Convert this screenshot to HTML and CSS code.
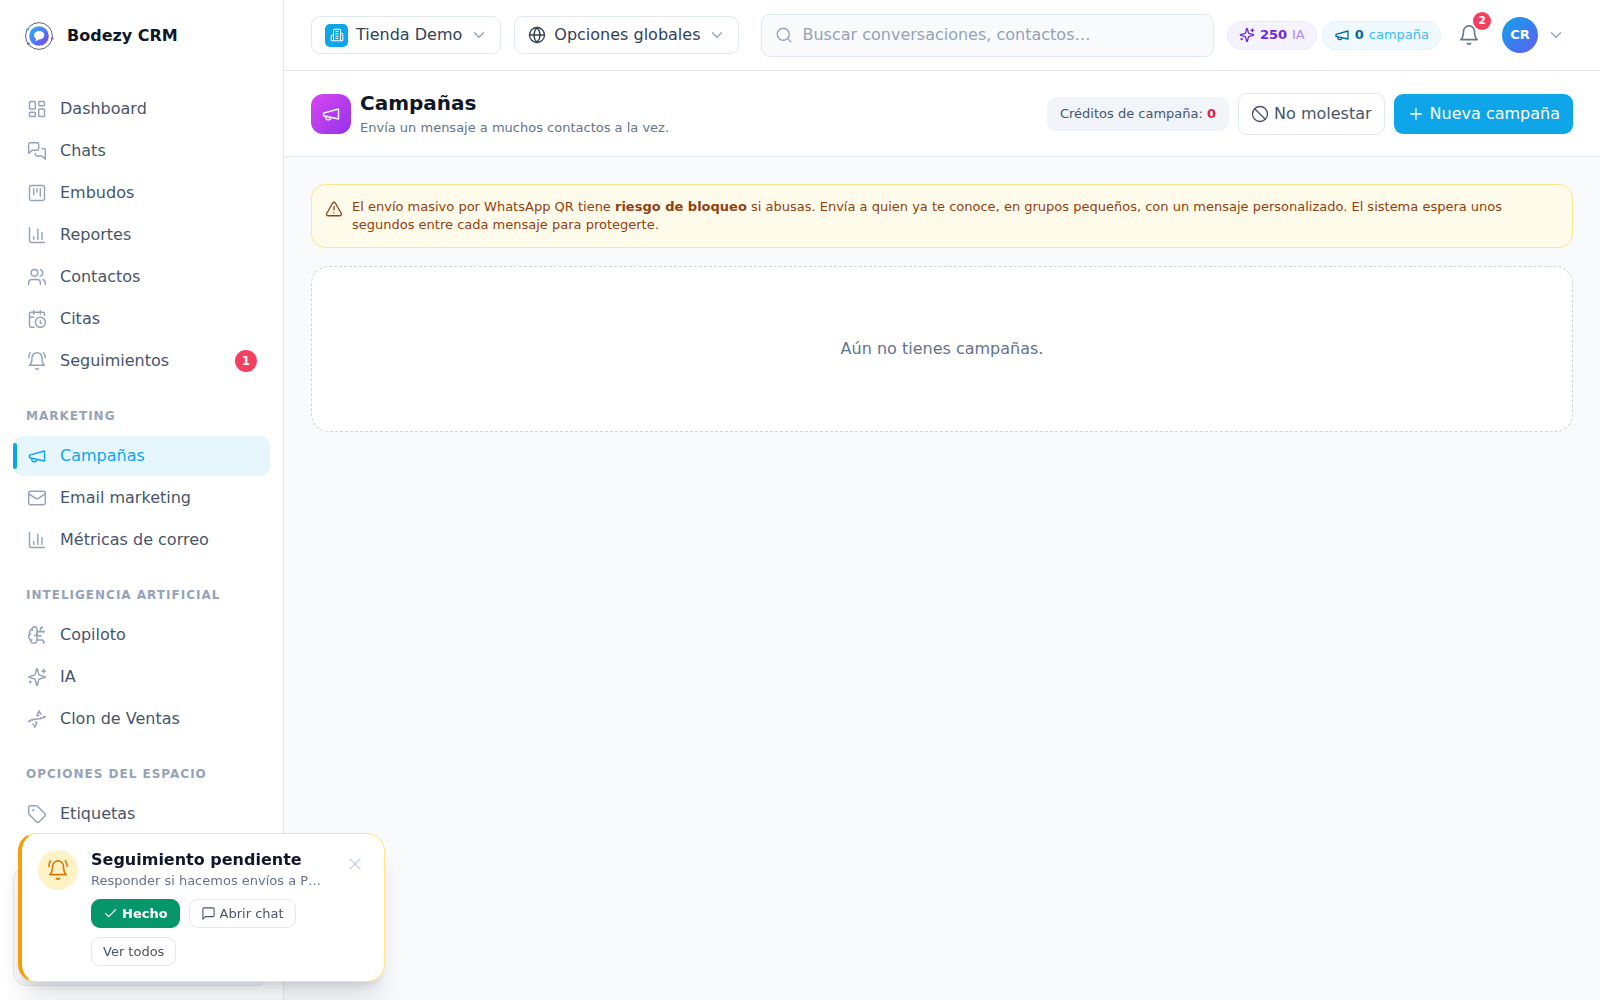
FILE: index.html
```html
<!DOCTYPE html>
<html lang="es">
<head>
<meta charset="utf-8">
<meta name="viewport" content="width=device-width, initial-scale=1">
<title>Campañas · Bodezy CRM</title>
<link rel="stylesheet" href="styles.css">
</head>
<body>
<svg class="sprite" aria-hidden="true">
  <symbol id="dashboard" viewBox="0 0 24 24"><rect x="3" y="3" width="7" height="9" rx="1"/><rect x="14" y="3" width="7" height="5" rx="1"/><rect x="14" y="12" width="7" height="9" rx="1"/><rect x="3" y="16" width="7" height="5" rx="1"/></symbol>
  <symbol id="chats" viewBox="0 0 24 24"><path d="M14 9a2 2 0 0 1-2 2H6l-4 4V4a2 2 0 0 1 2-2h8a2 2 0 0 1 2 2z"/><path d="M18 9h2a2 2 0 0 1 2 2v11l-4-4h-6a2 2 0 0 1-2-2v-1"/></symbol>
  <symbol id="kanban" viewBox="0 0 24 24"><rect x="3" y="3" width="18" height="18" rx="2"/><path d="M8 7v7M12 7v4M16 7v9"/></symbol>
  <symbol id="chart" viewBox="0 0 24 24"><path d="M3 3v16a2 2 0 0 0 2 2h16M18 17V9M13 17V5M8 17v-3"/></symbol>
  <symbol id="users" viewBox="0 0 24 24"><path d="M16 21v-2a4 4 0 0 0-4-4H6a4 4 0 0 0-4 4v2"/><circle cx="9" cy="7" r="4"/><path d="M22 21v-2a4 4 0 0 0-3-3.87M16 3.13a4 4 0 0 1 0 7.75"/></symbol>
  <symbol id="calendar" viewBox="0 0 24 24"><path d="M21 7.5V6a2 2 0 0 0-2-2H5a2 2 0 0 0-2 2v14a2 2 0 0 0 2 2h3.5M16 2v4M8 2v4M3 10h5M17.5 17.5 16 16.3V14"/><circle cx="16" cy="16" r="6"/></symbol>
  <symbol id="bell" viewBox="0 0 24 24"><path d="M6 8a6 6 0 0 1 12 0c0 7 3 9 3 9H3s3-2 3-9M10.3 21a1.94 1.94 0 0 0 3.4 0"/></symbol>
  <symbol id="bell-ring" viewBox="0 0 24 24"><path d="M6 8a6 6 0 0 1 12 0c0 7 3 9 3 9H3s3-2 3-9M10.3 21a1.94 1.94 0 0 0 3.4 0M4 2C2.8 3.7 2 5.7 2 8M22 8c0-2.3-.8-4.3-2-6"/></symbol>
  <symbol id="megaphone" viewBox="0 0 24 24"><path d="m3 11 18-5v12L3 14v-3zM11.6 16.8a3 3 0 1 1-5.8-1.6"/></symbol>
  <symbol id="mail" viewBox="0 0 24 24"><rect x="2" y="4" width="20" height="16" rx="2"/><path d="m22 7-8.97 5.7a1.94 1.94 0 0 1-2.06 0L2 7"/></symbol>
  <symbol id="brain" viewBox="0 0 24 24"><path d="M12 5a3 3 0 1 0-5.997.125 4 4 0 0 0-2.526 5.77 4 4 0 0 0 .556 6.588A4 4 0 1 0 12 18Z"/><path d="M9 13a4.5 4.5 0 0 0 3-4M6.003 5.125A3 3 0 0 0 6.401 6.5M3.477 10.896a4 4 0 0 1 .585-.396M6 18a4 4 0 0 1-1.967-.516M12 13h4M12 18h6a2 2 0 0 1 2 2v1M12 8h8M16 8V5a2 2 0 0 1 2-2"/><circle cx="16" cy="13" r=".5"/><circle cx="18" cy="3" r=".5"/><circle cx="20" cy="21" r=".5"/><circle cx="20" cy="8" r=".5"/></symbol>
  <symbol id="sparkles" viewBox="0 0 24 24"><path d="M9.937 15.5A2 2 0 0 0 8.5 14.063l-6.135-1.582a.5.5 0 0 1 0-.962L8.5 9.936A2 2 0 0 0 9.937 8.5l1.582-6.135a.5.5 0 0 1 .963 0L14.063 8.5A2 2 0 0 0 15.5 9.937l6.135 1.581a.5.5 0 0 1 0 .964L15.5 14.063a2 2 0 0 0-1.437 1.437l-1.582 6.135a.5.5 0 0 1-.963 0z"/><path d="M20 3v4M22 5h-4M4 17v2M5 18H3"/></symbol>
  <symbol id="dna" viewBox="0 0 24 24"><path d="m10 16 1.5 1.5M14 8l-1.5-1.5M15 2c-1.798 1.998-2.518 3.995-2.807 5.993M16.5 10.5l1 1M17 6l-2.891-2.891M2 15c6.667-6 13.333 0 20-6M20 9l.891.891M3.109 14.109 4 15M6.5 12.5l1 1M7 18l2.891 2.891M9 22c1.798-1.998 2.518-3.995 2.807-5.993"/></symbol>
  <symbol id="tag" viewBox="0 0 24 24"><path d="M12.586 2.586A2 2 0 0 0 11.172 2H4a2 2 0 0 0-2 2v7.172a2 2 0 0 0 .586 1.414l8.704 8.704a2.426 2.426 0 0 0 3.42 0l6.58-6.58a2.426 2.426 0 0 0 0-3.42z"/><circle cx="7.5" cy="7.5" r=".5"/></symbol>
  <symbol id="building" viewBox="0 0 24 24"><path d="M6 22V4a2 2 0 0 1 2-2h8a2 2 0 0 1 2 2v18ZM6 12H4a2 2 0 0 0-2 2v6a2 2 0 0 0 2 2h2M18 9h2a2 2 0 0 1 2 2v9a2 2 0 0 1-2 2h-2M10 6h4M10 10h4M10 14h4M10 18h4"/></symbol>
  <symbol id="globe" viewBox="0 0 24 24"><circle cx="12" cy="12" r="10"/><path d="M12 2a14.5 14.5 0 0 0 0 20 14.5 14.5 0 0 0 0-20M2 12h20"/></symbol>
  <symbol id="chevron" viewBox="0 0 24 24"><path d="m6 9 6 6 6-6"/></symbol>
  <symbol id="search" viewBox="0 0 24 24"><circle cx="11" cy="11" r="8"/><path d="m21 21-4.3-4.3"/></symbol>
  <symbol id="ban" viewBox="0 0 24 24"><circle cx="12" cy="12" r="10"/><path d="m4.9 4.9 14.2 14.2"/></symbol>
  <symbol id="plus" viewBox="0 0 24 24"><path d="M5 12h14M12 5v14"/></symbol>
  <symbol id="alert" viewBox="0 0 24 24"><path d="m21.73 18-8-14a2 2 0 0 0-3.48 0l-8 14A2 2 0 0 0 4 21h16a2 2 0 0 0 1.73-3M12 9v4M12 17h.01"/></symbol>
  <symbol id="check" viewBox="0 0 24 24"><path d="M20 6 9 17l-5-5"/></symbol>
  <symbol id="message" viewBox="0 0 24 24"><path d="M21 15a2 2 0 0 1-2 2H7l-4 4V5a2 2 0 0 1 2-2h14a2 2 0 0 1 2 2z"/></symbol>
  <symbol id="close" viewBox="0 0 24 24"><path d="M18 6 6 18M6 6l12 12"/></symbol>
</svg>

<div class="app">
  <aside class="sidebar">
    <a class="brand" href="#">
      <svg class="logo" viewBox="0 0 30 30" aria-hidden="true">
        <defs><linearGradient id="logo-fill" x1="0" y1="0" x2="1" y2="1"><stop offset="0" stop-color="#22b8fb"/><stop offset=".5" stop-color="#4f7bf7"/><stop offset="1" stop-color="#7c3aed"/></linearGradient></defs>
        <circle cx="15" cy="15" r="13.4" fill="#fff" stroke="#64647a"/>
        <circle cx="15" cy="15" r="9.8" fill="url(#logo-fill)"/>
        <path d="M15.200 10c-3 0-5.200 1.800-5.200 4.200 0 1.400.8 2.700 2 3.400 0 .9-.4 1.600-.9 2.200 1.500-.1 2.800-.7 3.700-1.400h.5c2.900-.1 5-1.800 5-4.200S18.100 10 15.200 10z" fill="#fff"/>
        <circle cx="3.600" cy="8.600" r="1.400" fill="#38bdf8"/><circle cx="28.200" cy="17.500" r="1.400" fill="#a855f7"/><circle cx="4.400" cy="22.800" r="1.400" fill="#6366f1"/>
      </svg>
      <span>Bodezy CRM</span>
    </a>
    <nav class="nav">
      <a class="nav-item" href="#"><svg class="icon"><use href="#dashboard"/></svg>Dashboard</a>
      <a class="nav-item" href="#"><svg class="icon"><use href="#chats"/></svg>Chats</a>
      <a class="nav-item" href="#"><svg class="icon"><use href="#kanban"/></svg>Embudos</a>
      <a class="nav-item" href="#"><svg class="icon"><use href="#chart"/></svg>Reportes</a>
      <a class="nav-item" href="#"><svg class="icon"><use href="#users"/></svg>Contactos</a>
      <a class="nav-item" href="#"><svg class="icon"><use href="#calendar"/></svg>Citas</a>
      <a class="nav-item" href="#"><svg class="icon"><use href="#bell-ring"/></svg>Seguimientos<span class="count">1</span></a>
      <h2 class="nav-title">Marketing</h2>
      <a class="nav-item active" href="#" aria-current="page"><svg class="icon"><use href="#megaphone"/></svg>Campañas</a>
      <a class="nav-item" href="#"><svg class="icon"><use href="#mail"/></svg>Email marketing</a>
      <a class="nav-item" href="#"><svg class="icon"><use href="#chart"/></svg>Métricas de correo</a>
      <h2 class="nav-title">Inteligencia artificial</h2>
      <a class="nav-item" href="#"><svg class="icon"><use href="#brain"/></svg>Copiloto</a>
      <a class="nav-item" href="#"><svg class="icon"><use href="#sparkles"/></svg>IA</a>
      <a class="nav-item" href="#"><svg class="icon"><use href="#dna"/></svg>Clon de Ventas</a>
      <h2 class="nav-title">Opciones del espacio</h2>
      <a class="nav-item" href="#"><svg class="icon"><use href="#tag"/></svg>Etiquetas</a>
    </nav>
    <div class="sidebar-foot"><div class="foot-card"></div></div>
  </aside>

  <div class="content">
    <header class="topbar">
      <button class="picker" type="button"><span class="org-tile"><svg class="icon"><use href="#building"/></svg></span>Tienda Demo<svg class="icon chevron"><use href="#chevron"/></svg></button>
      <button class="picker" type="button"><svg class="icon globe"><use href="#globe"/></svg>Opciones globales<svg class="icon chevron"><use href="#chevron"/></svg></button>
      <label class="search">
        <svg class="icon"><use href="#search"/></svg>
        <input type="search" placeholder="Buscar conversaciones, contactos…" aria-label="Buscar">
      </label>
      <div class="credits">
        <a class="pill violet" href="#"><svg class="icon"><use href="#sparkles"/></svg><b>250</b> <span>IA</span></a>
        <a class="pill sky" href="#"><svg class="icon"><use href="#megaphone"/></svg><b>0</b> <span>campaña</span></a>
      </div>
      <button class="bell" type="button" aria-label="Notificaciones"><svg class="icon"><use href="#bell"/></svg><span class="bell-count">2</span></button>
      <button class="account" type="button"><span class="avatar">CR</span><svg class="icon chevron"><use href="#chevron"/></svg></button>
    </header>

    <div class="page-head">
      <span class="page-tile"><svg class="icon"><use href="#megaphone"/></svg></span>
      <div class="page-title">
        <h1>Campañas</h1>
        <p>Envía un mensaje a muchos contactos a la vez.</p>
      </div>
      <div class="actions">
        <span class="chip">Créditos de campaña: <b>0</b></span>
        <button class="btn outline" type="button"><svg class="icon"><use href="#ban"/></svg>No molestar</button>
        <button class="btn primary" type="button"><svg class="icon"><use href="#plus"/></svg>Nueva campaña</button>
      </div>
    </div>

    <main class="main">
      <div class="notice">
        <svg class="icon"><use href="#alert"/></svg>
        <p>El envío masivo por WhatsApp QR tiene <b>riesgo de bloqueo</b> si abusas. Envía a quien ya te conoce, en grupos pequeños, con un mensaje personalizado. El sistema espera unos segundos entre cada mensaje para protegerte.</p>
      </div>
      <div class="empty">Aún no tienes campañas.</div>
    </main>
  </div>
</div>

<section class="toast" role="status">
  <span class="toast-icon"><svg class="icon"><use href="#bell-ring"/></svg></span>
  <div class="toast-body">
    <h3>Seguimiento pendiente</h3>
    <p>Responder si hacemos envíos a P…</p>
    <div class="toast-actions">
      <button class="small done" type="button"><svg class="icon"><use href="#check"/></svg>Hecho</button>
      <button class="small" type="button"><svg class="icon"><use href="#message"/></svg>Abrir chat</button>
      <button class="small" type="button">Ver todos</button>
    </div>
  </div>
  <button class="toast-close" type="button" aria-label="Cerrar"><svg class="icon"><use href="#close"/></svg></button>
</section>
</body>
</html>
```
FILE: styles.css
```css
* { box-sizing: border-box; margin: 0; }

body {
  font-family: "DejaVu Sans", sans-serif;
  font-size: 16px;
  line-height: 22px;
  color: #475569;
  background: #f8fafc;
}

button, input { font: inherit; color: inherit; }
button { cursor: pointer; background: none; border: 0; padding: 0; white-space: nowrap; }
a { color: inherit; text-decoration: none; }

.sprite { display: none; }
.icon {
  width: 20px;
  height: 20px;
  flex: none;
  fill: none;
  stroke: currentColor;
  stroke-width: 1.75;
  stroke-linecap: round;
  stroke-linejoin: round;
}
.icon.chevron { width: 18px; height: 18px; color: #94a3b8; }

.app { display: flex; height: 100vh; }

/* Sidebar */
.sidebar {
  display: flex;
  flex-direction: column;
  flex: none;
  width: 284px;
  background: #fff;
  border-right: 1px solid #e2e8f0;
}
.brand {
  display: flex;
  align-items: center;
  gap: 13px;
  flex: none;
  height: 71px;
  padding: 0 24px;
  font-weight: 700;
  color: #0f172a;
}
.logo { width: 30px; height: 30px; }
.nav {
  display: flex;
  flex-direction: column;
  gap: 2px;
  flex: 1;
  min-height: 0;
  padding: 18px 13px 0;
  overflow: hidden;
}
.nav-item {
  position: relative;
  display: flex;
  align-items: center;
  gap: 13px;
  flex: none;
  height: 40px;
  padding: 0 13px 0 14px;
  border-radius: 9px;
}
.nav-item .icon { color: #94a3b8; }
.nav-item.active, .nav-item.active .icon { color: #0ea5e9; }
.nav-item.active { background: #e7f6fd; }
.nav-item.active::before {
  content: "";
  position: absolute;
  left: 0;
  top: 7px;
  width: 4px;
  height: 26px;
  border-radius: 2px;
  background: #0ea5e9;
}
.nav-title {
  flex: none;
  padding: 24px 13px 9px;
  font-size: 12px;
  line-height: 18px;
  letter-spacing: 1px;
  text-transform: uppercase;
  color: #94a3b8;
}
.count {
  min-width: 22px;
  height: 22px;
  margin-left: auto;
  border-radius: 11px;
  background: #f43f5e;
  color: #fff;
  font-size: 12px;
  font-weight: 700;
  text-align: center;
}
.sidebar-foot { flex: none; padding: 13px 13px 14px; }
.foot-card { height: 120px; border: 1px solid #e2e8f0; border-radius: 14px; background: #f8fafc; }

/* Top bar */
.content { flex: 1; min-width: 0; display: flex; flex-direction: column; }
.topbar {
  display: flex;
  align-items: center;
  flex: none;
  height: 71px;
  padding: 0 27px;
  background: #fff;
  border-bottom: 1px solid #e2e8f0;
}
.picker {
  display: flex;
  align-items: center;
  gap: 8px;
  height: 38px;
  margin-right: 13px;
  padding: 0 12px 0 13px;
  border: 1px solid #e2e8f0;
  border-radius: 9px;
  color: #334155;
}
.picker .globe { width: 18px; height: 18px; }
.org-tile {
  display: grid;
  place-items: center;
  width: 23px;
  height: 23px;
  border-radius: 5px;
  background: #0ea5e9;
  color: #fff;
}
.org-tile .icon { width: 14px; height: 14px; }
.search {
  display: flex;
  align-items: center;
  gap: 9px;
  flex: 1;
  min-width: 0;
  height: 43px;
  margin: 0 13px 0 9px;
  padding: 0 13px;
  border: 1px solid #e2e8f0;
  border-radius: 9px;
  background: #f8fafc;
}
.search .icon { width: 18px; height: 18px; color: #94a3b8; }
.search input { flex: 1; min-width: 0; padding: 0; border: 0; outline: 0; background: none; }
.search input::placeholder { color: #94a3b8; opacity: 1; }
.credits { display: flex; gap: 5px; }
.pill {
  display: flex;
  align-items: center;
  gap: 5px;
  height: 29px;
  padding: 0 11px;
  border: 1px solid;
  border-radius: 15px;
  font-size: 13px;
}
.pill .icon { width: 16px; height: 16px; stroke-width: 2; }
.violet { background: #f5f3ff; border-color: #ede9fe; color: #6d28d9; }
.violet span { color: #a78bfa; }
.sky { background: #f0f9ff; border-color: #e0f2fe; color: #0369a1; }
.sky span { color: #38bdf8; }
.bell { position: relative; display: grid; place-items: center; width: 40px; height: 40px; margin: 0 13px 0 8px; color: #64748b; }
.bell .icon { width: 22px; height: 22px; }
.bell-count {
  position: absolute;
  top: -3px;
  right: -2px;
  width: 18px;
  height: 18px;
  border-radius: 9px;
  background: #f43f5e;
  color: #fff;
  font-size: 11px;
  font-weight: 700;
  line-height: 18px;
}
.account { display: flex; align-items: center; gap: 9px; padding-right: 8px; }
.avatar {
  width: 36px;
  height: 36px;
  border-radius: 50%;
  background: linear-gradient(135deg, #0ea5e9, #4f6bf0 80%, #6366f1);
  color: #fff;
  font-size: 13px;
  font-weight: 700;
  line-height: 36px;
}

/* Page header */
.page-head {
  display: flex;
  align-items: center;
  flex: none;
  gap: 9px;
  padding: 18px 27px 17px;
  background: #fff;
  border-bottom: 1px solid #e2e8f0;
}
.page-tile {
  display: grid;
  place-items: center;
  flex: none;
  width: 40px;
  height: 40px;
  border-radius: 12px;
  background: linear-gradient(135deg, #d946ef, #9333ea);
  color: #fff;
}
.page-title { flex: 1; }
.page-title h1 { font-size: 20px; line-height: 28px; color: #0f172a; }
.page-title p { font-size: 13px; line-height: 22px; color: #64748b; }
.actions { display: flex; align-items: center; gap: 9px; }
.chip { padding: 8px 13px; border-radius: 9px; background: #f1f5f9; font-size: 13px; line-height: 18px; }
.chip b { color: #e11d48; }
.btn { display: flex; align-items: center; gap: 5px; height: 40px; padding: 0 13px; border-radius: 9px; }
.btn .icon { width: 18px; height: 18px; }
.outline { height: 42px; padding: 0 12px; border: 1px solid #e2e8f0; }
.primary { background: #0ea5e9; color: #fff; }

/* Body of the page */
.main { display: flex; flex-direction: column; gap: 18px; padding: 27px; }
.notice {
  display: flex;
  gap: 9px;
  padding: 13px;
  border: 1px solid #fde68a;
  border-radius: 14px;
  background: #fffbeb;
  color: #92400e;
  font-size: 13px;
  line-height: 18px;
}
.notice .icon { width: 18px; height: 18px; margin-top: 2px; }
.empty {
  padding: 71px 20px;
  border: 1px dashed #cbd5e1;
  border-radius: 18px;
  background: #fff;
  color: #64748b;
  text-align: center;
}

/* Reminder over the page */
.toast {
  position: fixed;
  left: 18px;
  bottom: 18px;
  display: flex;
  gap: 13px;
  width: 367px;
  padding: 16px 16px 15px;
  border: 1px solid #fde68a;
  border-left: 4px solid #f59e0b;
  border-radius: 18px;
  background: #fff;
  box-shadow: 0 22px 28px -6px rgba(15, 23, 42, .12), 0 9px 11px -6px rgba(15, 23, 42, .12);
}
.toast-icon {
  display: grid;
  place-items: center;
  flex: none;
  width: 40px;
  height: 40px;
  border-radius: 50%;
  background: #fef3c7;
  color: #d97706;
}
.toast-icon .icon { width: 22px; height: 22px; }
.toast-body { flex: 1; min-width: 0; }
.toast-body h3 { font-size: 16px; line-height: 20px; color: #0f172a; }
.toast-body p { font-size: 13px; line-height: 22px; color: #64748b; }
.toast-actions { display: flex; flex-wrap: wrap; gap: 9px; margin-top: 7px; }
.small {
  display: flex;
  align-items: center;
  gap: 4px;
  height: 29px;
  padding: 0 11px;
  border: 1px solid #e2e8f0;
  border-radius: 9px;
  font-size: 13px;
}
.small .icon { width: 15px; height: 15px; }
.done { background: #059669; border-color: #059669; color: #fff; font-weight: 700; }
.toast-close { align-self: flex-start; margin: 4px 3px 0 0; color: #cbd5e1; }
.toast-close .icon { display: block; width: 20px; height: 20px; }
```
